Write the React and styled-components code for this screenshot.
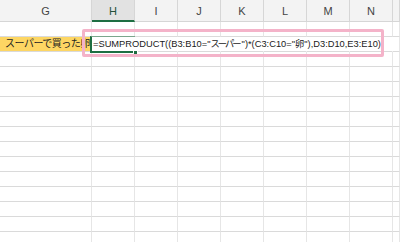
import React from "react";
import styled, { createGlobalStyle } from "styled-components";

const COLUMNS = ["G", "H", "I", "J", "K", "L", "M", "N", ""];
const ROWS = 15;
const FORMULA_ROW = 1;

// formula split so the kana can be set tighter, like the narrow UI font in the sheet
const FORMULA_PARTS = [
  { text: '=SUMPRODUCT((B3:B10="' },
  { text: "スーパー", kana: true },
  { text: '")*(C3:C10="' },
  { text: "卵" },
  { text: '"),D3:D10,E3:E10)' },
];

const App = () => {
  return (
    <Page>
      <GlobalStyle />
      <Sheet>
        {COLUMNS.map((c) => (
          <HeaderCell key={c || "end"} $active={c === "H"}>
            {c}
          </HeaderCell>
        ))}
        {Array.from({ length: ROWS }).map((_, r) =>
          COLUMNS.map((c, i) => {
            if (r === FORMULA_ROW && c === "G") {
              return (
                <LabelCell key={r + c}>
                  <LabelText>スーパーで買った卵</LabelText>
                </LabelCell>
              );
            }
            if (r === FORMULA_ROW && c === "H") {
              return (
                <ActiveCell key={r + c}>
                  <Formula>
                    {FORMULA_PARTS.map((p, k) => (
                      <FormulaPart key={k} $kana={p.kana}>
                        {p.text}
                      </FormulaPart>
                    ))}
                  </Formula>
                  <FillHandle />
                </ActiveCell>
              );
            }
            return (
              <Cell
                key={r + "-" + i}
                $noRight={r === FORMULA_ROW && i > 1 && i < 8}
              />
            );
          })
        )}
        <Callout />
      </Sheet>
    </Page>
  );
};

export default App;

const GlobalStyle = createGlobalStyle`
  html, body {
    margin: 0;
    padding: 0;
    background: #ffffff;
    overflow: hidden;
  }
  * {
    box-sizing: border-box;
  }
`;

const Page = styled.div`
  width: 400px;
  height: 242px;
  overflow: hidden;
  font-family: "Liberation Sans", "Noto Sans CJK JP", sans-serif;
`;

const Sheet = styled.div`
  position: relative;
  display: grid;
  grid-template-columns: 92px repeat(7, 43px) 1fr;
  grid-template-rows: 22px;
  grid-auto-rows: 15px;
`;

const HeaderCell = styled.div`
  display: flex;
  align-items: center;
  justify-content: center;
  background: ${(p) => (p.$active ? "#e2e2e2" : "#f3f3f3")};
  border-right: 1px solid #d6d6d6;
  border-bottom: ${(p) =>
    p.$active ? "2px solid #1e6e42" : "1px solid #d6d6d6"};
  color: ${(p) => (p.$active ? "#24513a" : "#444444")};
  font-size: 11px;
  padding-top: ${(p) => (p.$active ? "1px" : "0")};
`;

const Cell = styled.div`
  border-right: 1px solid ${(p) => (p.$noRight ? "transparent" : "#e6e6e6")};
  border-bottom: 1px solid #dadada;
`;

const LabelCell = styled.div`
  background: #fdd663;
  border-right: 1px solid #6b6a55;
  border-bottom: 1px solid #dadada;
  overflow: hidden;
  display: flex;
  align-items: center;
`;

const LabelText = styled.span`
  white-space: nowrap;
  padding-left: 5px;
  font-size: 10px;
  letter-spacing: -0.5px;
  color: #222222;
  line-height: 14px;
`;

const ActiveCell = styled.div`
  position: relative;
  z-index: 1;
  display: flex;
  align-items: center;
  border-left: 2px solid #1e6e42;
  border-bottom: 2px solid #1e6e42;
  border-top: 1px solid #7aa68c;
  margin-left: -2px;
  margin-top: -1px;
  height: 17px;
  min-width: 0;
`;

const Formula = styled.span`
  white-space: nowrap;
  flex-shrink: 0;
  padding-left: 1px;
  font-size: 9.3px;
  line-height: 14px;
  color: #1a1a1a;
`;

const FormulaPart = styled.span`
  letter-spacing: ${(p) => (p.$kana ? "-2px" : "0")};
  margin-right: ${(p) => (p.$kana ? "2px" : "0")};
`;

const FillHandle = styled.span`
  position: absolute;
  left: 41px;
  bottom: -4px;
  width: 5px;
  height: 5px;
  background: #1e6e42;
  border: 1px solid #ffffff;
`;

const Callout = styled.div`
  position: absolute;
  left: 82px;
  top: 29px;
  width: 302px;
  height: 28px;
  border: 3px solid #f4b3c9;
  border-radius: 2px;
  z-index: 2;
  pointer-events: none;
`;
